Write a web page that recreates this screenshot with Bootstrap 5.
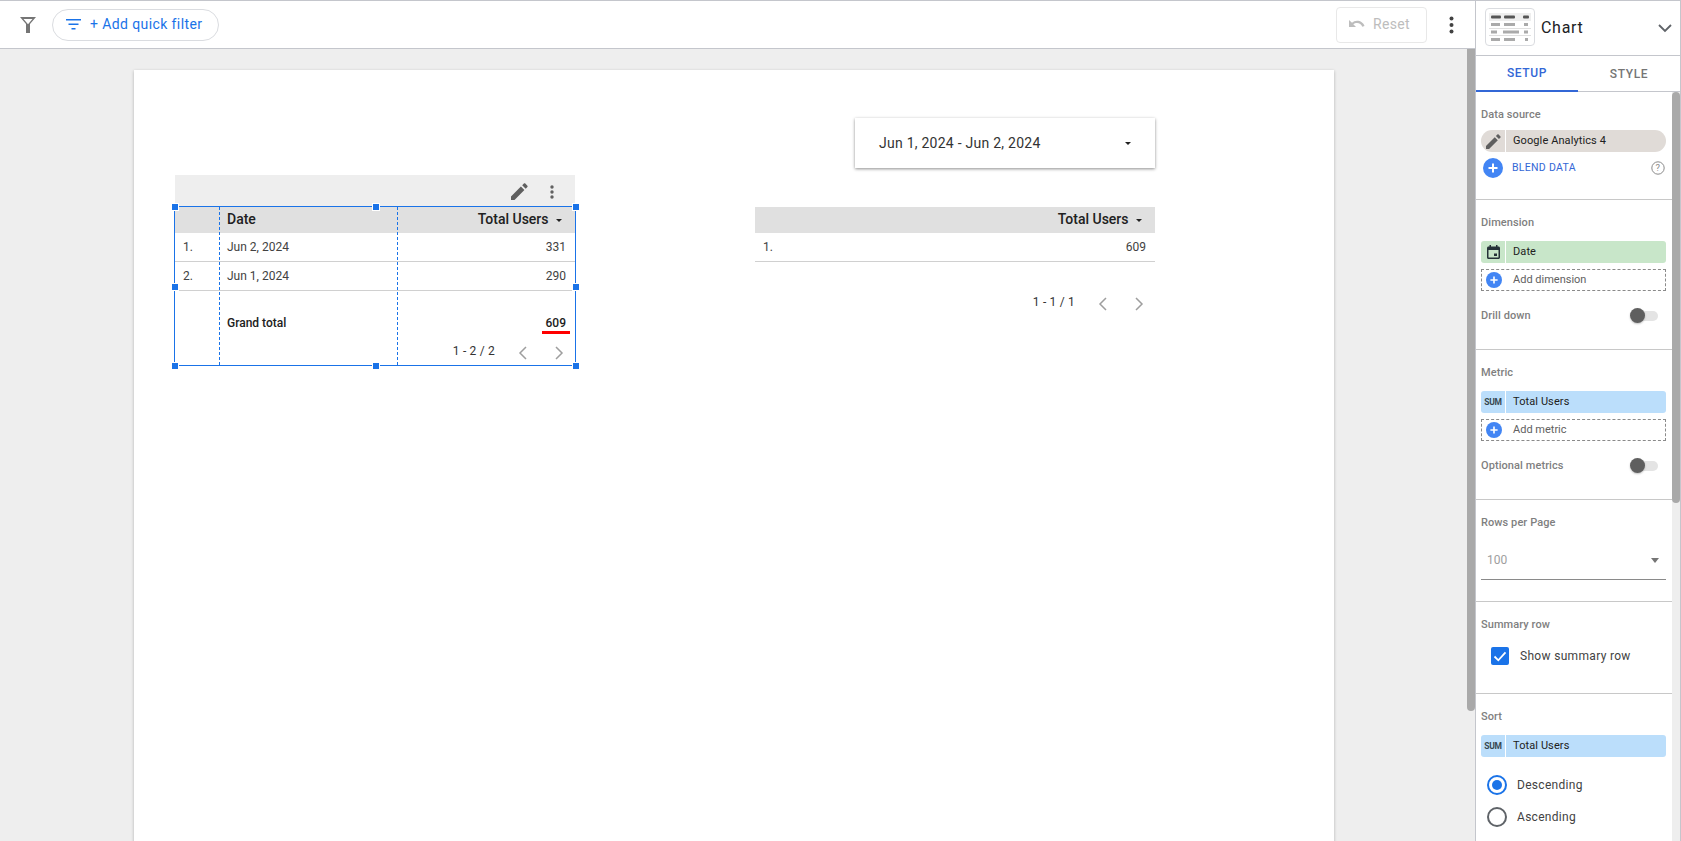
<!DOCTYPE html>
<html lang="en">
<head>
<meta charset="utf-8">
<title>Chart editor</title>
<link href="https://cdn.jsdelivr.net/npm/bootstrap@5.3.0/dist/css/bootstrap.min.css" rel="stylesheet">
<style>
html,body{height:100%;overflow:hidden}
body{font-family:Roboto,"Liberation Sans",sans-serif;font-size:12px;color:#212121;background:#fff}
.app{height:841px;width:1681px}
.leftarea{width:1476px;border-right:1px solid #c4c6cc;border-top:1px solid #c4c6cc}
.topbar{height:48px;border-bottom:1px solid #c4c6cc;padding-left:20px;padding-right:0}
.filter-pill{margin-left:16px;height:32px;width:167px;border:1px solid #dadce0;border-radius:16px;padding-left:13px;color:#1a73e8;font-size:14px;background:#fff;letter-spacing:.4px}
.filter-pill svg{margin-right:9px}
.reset-btn{height:36px;width:91px;border:1px solid #e8e8e8;border-radius:4px;color:#bdbdbd;font-size:14px;padding-left:12px;margin-right:14px;letter-spacing:.35px}
.reset-btn svg{margin-right:8px}
.kebab-box{width:21px;margin-right:13px}
.canvas-wrap{height:792px;background:#eee}
.canvas-main{padding:21px 0 0 134px;overflow:hidden}
.sheet{width:1200px;height:780px;background:#fff;box-shadow:0 1px 3px rgba(0,0,0,.25);position:relative}
.vbar{width:8px;background:#eee}
.canvas-thumb{height:662px;background:#a9a9a9;border-radius:0 0 4px 4px}
.panel-thumb{height:411px;background:#a9a9a9;border-radius:4px}
.date-ctl{position:absolute;left:721px;top:48px;width:300px;height:50px;background:#fff;box-shadow:0 1px 3px rgba(0,0,0,.45);padding:0 24px 0 24px;font-size:14px;color:#333;letter-spacing:.25px}
.caret-d{width:0;height:0;border-left:3.5px solid transparent;border-right:3.5px solid transparent;border-top:3.5px solid #212121}
.tbl-a{position:absolute;left:41px;top:137px;width:400px;height:159px}
.tbl-b{position:absolute;left:621px;top:137px;width:400px;height:120px}
.tbl-tools{position:absolute;left:41px;top:105px;width:400px;height:31px;background:#eee;padding-right:21px;padding-top:2px}
.hdr-row{height:26px;background:#e0e0e0;font-size:14px;font-weight:500;color:#212121;padding-bottom:2px}
.data-row{height:29px;border-bottom:1px solid #d0d0d0;color:#424242}
.total-row{height:46px;font-weight:500;color:#212121;padding-top:17px}
.col-idx{width:44px;padding-left:8px;flex:none}
.col-date{width:178px;padding-left:8px;flex:none}
.col-num{flex:1;text-align:right;padding-right:9px}
.col-num-b{flex:1;text-align:right;padding-right:9px}
.hdr-row .caret-d{margin-left:4px;margin-right:13px;display:inline-block;vertical-align:2px}
.hdr-row .col-num,.hdr-row .col-num-b{padding-right:0}
.num-red{position:relative;display:inline-block}
.num-red::after{content:"";position:absolute;left:-4px;right:-4px;bottom:-2px;height:3px;background:#f00}
.pager{color:#333;font-size:12px;letter-spacing:.2px}
.pager-a{height:28px;padding-right:11px}
.pager-b{position:absolute;left:621px;top:220px;width:400px;height:24px;padding-right:11px}
.pager span{margin-right:23px}
.pager svg{margin-top:4px}
.pager svg+svg{margin-left:26px}
.sel-box{position:absolute;left:40px;top:136px;width:402px;height:160px;border:1px solid #1a73e8;pointer-events:none}
.sel-line{position:absolute;top:0;bottom:0;border-left:1px dashed #1a73e8}
.sel-l1{left:44px}
.sel-l2{left:222px}
.handle{position:absolute;width:8px;height:8px;background:#1a73e8;border:1px solid #fff}
.h-tl{left:-4px;top:-4px}.h-tc{left:197px;top:-4px}.h-tr{left:397px;top:-4px}
.h-ml{left:-4px;top:76px}.h-mr{left:397px;top:76px}
.h-bl{left:-4px;top:155px}.h-bc{left:197px;top:155px}.h-br{left:397px;top:155px}
.tool-pencil{margin-right:22px}
.sidepanel{width:205px;border-right:1px solid #c4c6cc;border-top:1px solid #c4c6cc;background:#fff}
.panel-head{height:55px;border-bottom:1px solid #c4c6cc;padding:0 8px 0 9px}
.chart-thumb{width:50px;height:38px;border:1px solid #dadce0;border-radius:4px;margin-right:6px;margin-top:-2px}
.panel-title{font-size:16px;color:#202124;letter-spacing:.7px}
.tabbar{height:36px;border-bottom:1px solid #c4c6cc}
.tabx{width:102px;height:36px;font-size:12px;font-weight:500;color:#757575;letter-spacing:.6px}
.tabx.on{color:#3367d6;border-bottom:2px solid #3367d6}
.panel-body{height:749px;overflow:hidden}
.panel-content{flex:1;width:196px}
.sect{border-bottom:1px solid #c8c8c8;padding:15px 5px 0 5px;height:108px}
.sect.s-dim,.sect.s-met{height:150px}
.sect.s-rows{height:102px}
.sect.s-sum{height:92px}
.sect.s-sort{border-bottom:0;height:200px}
.sect-label{font-size:11px;font-weight:500;color:#7f7f7f;line-height:16px;margin-bottom:10px;letter-spacing:.08px}
.s-data .sect-label{margin-bottom:7px}
.chip{height:22px;width:185px;border-radius:3px;font-size:11px;color:#212121;letter-spacing:.1px}
.chip-l{width:25px;height:22px;flex:none;border-right:1px solid #fff;margin-right:1px}
.chip-t{padding-left:6px}
.chip-src{background:#e0dbd7;border-radius:11px}
.chip-dim{background:#c8e6c9}
.chip-met{background:#bbdefb}
.sum-txt{font-size:8.5px;font-weight:700;color:#37474f;letter-spacing:-.3px}
.blend{height:22px;margin-top:5px;width:185px;color:#3367d6;font-size:10.5px;padding:0 1px 0 2px;letter-spacing:.3px}
.blend-t{margin-left:9px;flex:1}
.add-row{height:22px;width:185px;margin-top:6px;border:1px dashed #8a8a8a;font-size:11px;color:#616161;padding-left:4px;letter-spacing:0}
.add-row svg{margin-right:11px}
.opt-row{height:22px;margin-top:14px;width:177px;font-size:11px;font-weight:500;color:#7f7f7f;letter-spacing:.08px}
.toggle{width:28px;height:16px;position:relative}
.toggle::before{content:"";position:absolute;left:7px;right:0;top:3px;height:10px;border-radius:5px;background:#e4e4e4}
.toggle::after{content:"";position:absolute;left:0;top:0;width:15px;height:15px;border-radius:50%;background:#5f5f5f;box-shadow:0 1px 2px rgba(0,0,0,.25)}
.sel-field{width:185px;height:39px;padding:0 7px 0 6px;border-bottom:1px solid #8a8a8a;color:#9e9e9e;font-size:12px}
.caret-g{width:0;height:0;border-left:4.5px solid transparent;border-right:4.5px solid transparent;border-top:5px solid #757575}
.chk-row{padding-left:10px;font-size:12px;color:#424242;margin-top:14px;letter-spacing:.32px}
.chk-box{width:18px;height:18px;background:#1a73e8;border-radius:2px;margin-right:11px}
.radio-row{font-size:12px;color:#424242;padding-left:6px;height:32px;letter-spacing:.3px}
.radio-first{margin-top:12px}
.radio-ring{width:20px;height:20px;border-radius:50%;border:2px solid #5f6368;margin-right:10px;flex:none}
.radio-ring.on{border-color:#1a73e8;position:relative}
.radio-ring.on::after{content:"";position:absolute;left:3px;top:3px;width:10px;height:10px;border-radius:50%;background:#1a73e8}
</style>
</head>
<body>
<div class="app d-flex">
  <div class="leftarea d-flex flex-column">
    <div class="topbar d-flex align-items-center">
      <svg width="16" height="16" viewBox="0 0 16 16" aria-hidden="true"><path d="M0 0h16l-6 7v9H6V7ZM3.500 2 8 7.300 12.500 2Z" fill="#757575" fill-rule="evenodd"/></svg>
      <div class="filter-pill d-flex align-items-center">
        <svg width="15" height="11" viewBox="0 0 15 11" aria-hidden="true"><path d="M0 0h15v1.500H0ZM2.500 4.500h10V6h-10ZM5.500 9h4v1.500h-4Z" fill="#1a73e8"/></svg>
        <span>+ Add quick filter</span>
      </div>
      <div class="ms-auto d-flex align-items-center">
        <div class="reset-btn d-flex align-items-center">
          <svg width="16" height="9" viewBox="0 0 16 9" aria-hidden="true"><path d="M0 0v7h7L4.300 4.300C5.300 3.500 6.600 3 8 3c2.400 0 4.500 1.600 5.300 3.700L15.500 6C14.500 2.800 11.500.8 8 .8 6.100.8 4.300 1.500 3 2.800Z" fill="#bdbdbd"/></svg>
          <span>Reset</span>
        </div>
        <div class="kebab-box d-flex justify-content-center">
          <svg width="5" height="18" viewBox="0 0 5 18" aria-hidden="true"><circle cx="2.500" cy="2.500" r="2" fill="#424242"/><circle cx="2.500" cy="9" r="2" fill="#424242"/><circle cx="2.500" cy="15.500" r="2" fill="#424242"/></svg>
        </div>
      </div>
    </div>
    <div class="canvas-wrap d-flex">
      <div class="canvas-main flex-grow-1">
        <div class="sheet">
          <div class="date-ctl d-flex align-items-center justify-content-between">
            <span>Jun 1, 2024 - Jun 2, 2024</span>
            <i class="caret-d"></i>
          </div>

          <div class="tbl-tools d-flex align-items-center justify-content-end">
            <svg class="tool-pencil" width="17" height="17" viewBox="0 0 17 17" aria-hidden="true"><path d="M0 13.500V17h3.500L13.400 7.100 9.900 3.600ZM16.400 4.100c.4-.4.400-1 0-1.400L14.300.6c-.4-.4-1-.4-1.400 0L11.200 2.300l3.500 3.500Z" fill="#5f5f5f"/></svg>
            <svg width="4" height="14" viewBox="0 0 4 14" aria-hidden="true"><circle cx="2" cy="2" r="1.700" fill="#616161"/><circle cx="2" cy="7" r="1.700" fill="#616161"/><circle cx="2" cy="12" r="1.700" fill="#616161"/></svg>
          </div>

          <div class="tbl-a">
            <div class="hdr-row d-flex align-items-center">
              <div class="col-idx"></div>
              <div class="col-date">Date</div>
              <div class="col-num">Total Users <i class="caret-d"></i></div>
            </div>
            <div class="data-row d-flex align-items-center">
              <div class="col-idx">1.</div><div class="col-date">Jun 2, 2024</div><div class="col-num">331</div>
            </div>
            <div class="data-row d-flex align-items-center">
              <div class="col-idx">2.</div><div class="col-date">Jun 1, 2024</div><div class="col-num">290</div>
            </div>
            <div class="total-row d-flex align-items-center">
              <div class="col-idx"></div><div class="col-date">Grand total</div><div class="col-num"><span class="num-red">609</span></div>
            </div>
            <div class="pager pager-a d-flex align-items-center justify-content-end">
              <span>1 - 2 / 2</span>
              <svg width="10" height="14" viewBox="0 0 10 14" aria-hidden="true"><path d="M8 1 2 7l6 6" fill="none" stroke="#9e9e9e" stroke-width="1.500"/></svg>
              <svg width="10" height="14" viewBox="0 0 10 14" aria-hidden="true"><path d="m2 1 6 6-6 6" fill="none" stroke="#9e9e9e" stroke-width="1.500"/></svg>
            </div>
          </div>

          <div class="sel-box">
            <div class="sel-line sel-l1"></div>
            <div class="sel-line sel-l2"></div>
            <i class="handle h-tl"></i><i class="handle h-tc"></i><i class="handle h-tr"></i>
            <i class="handle h-ml"></i><i class="handle h-mr"></i>
            <i class="handle h-bl"></i><i class="handle h-bc"></i><i class="handle h-br"></i>
          </div>

          <div class="tbl-b">
            <div class="hdr-row d-flex align-items-center">
              <div class="col-idx"></div>
              <div class="col-num-b">Total Users <i class="caret-d"></i></div>
            </div>
            <div class="data-row d-flex align-items-center">
              <div class="col-idx">1.</div><div class="col-num-b">609</div>
            </div>
          </div>
          <div class="pager pager-b d-flex align-items-center justify-content-end">
            <span>1 - 1 / 1</span>
            <svg width="10" height="14" viewBox="0 0 10 14" aria-hidden="true"><path d="M8 1 2 7l6 6" fill="none" stroke="#9e9e9e" stroke-width="1.500"/></svg>
            <svg width="10" height="14" viewBox="0 0 10 14" aria-hidden="true"><path d="m2 1 6 6-6 6" fill="none" stroke="#9e9e9e" stroke-width="1.500"/></svg>
          </div>
        </div>
      </div>
      <div class="vbar"><div class="canvas-thumb"></div></div>
    </div>
  </div>

  <div class="sidepanel d-flex flex-column">
    <div class="panel-head d-flex align-items-center">
      <div class="chart-thumb d-flex align-items-center justify-content-center">
        <svg width="42" height="30" viewBox="0 0 42 30" aria-hidden="true">
          <rect x="0" y="1" width="42" height="8" fill="#eee"/>
          <rect x="2" y="3.500" width="10" height="3" rx="1" fill="#555"/><rect x="15" y="3.500" width="11" height="3" rx="1" fill="#555"/><rect x="34" y="3.500" width="6" height="3" rx="1" fill="#555"/>
          <rect x="2" y="11" width="9" height="3" fill="#aaa"/><rect x="15" y="11" width="11" height="3" fill="#aaa"/><rect x="35" y="11" width="4" height="3" fill="#aaa"/>
          <rect x="0" y="16" width="42" height="1" fill="#e0e0e0"/>
          <rect x="2" y="18.500" width="6" height="3" fill="#aaa"/><rect x="14" y="18.500" width="16" height="3" fill="#aaa"/><rect x="35" y="18.500" width="4" height="3" fill="#aaa"/>
          <rect x="0" y="23" width="42" height="1" fill="#e0e0e0"/>
          <rect x="2" y="26" width="9" height="3" fill="#aaa"/><rect x="15" y="26" width="11" height="3" fill="#aaa"/><rect x="36" y="26" width="3" height="3" fill="#aaa"/>
        </svg>
      </div>
      <span class="panel-title">Chart</span>
      <svg class="ms-auto" width="14" height="9" viewBox="0 0 14 9" aria-hidden="true"><path d="m1 1 6 6 6-6" fill="none" stroke="#5f6368" stroke-width="1.800"/></svg>
    </div>
    <div class="tabbar d-flex">
      <div class="tabx on d-flex align-items-center justify-content-center">SETUP</div>
      <div class="tabx d-flex align-items-center justify-content-center">STYLE</div>
    </div>
    <div class="panel-body d-flex">
      <div class="panel-content">
        <section class="sect s-data">
          <div class="sect-label">Data source</div>
          <div class="chip chip-src d-flex align-items-center">
            <div class="chip-l d-flex align-items-center justify-content-center">
              <svg width="15" height="15" viewBox="0 0 17 17" aria-hidden="true"><path d="M0 13.500V17h3.500L13.400 7.100 9.900 3.600ZM16.400 4.100c.4-.4.400-1 0-1.400L14.300.6c-.4-.4-1-.4-1.400 0L11.200 2.300l3.500 3.500Z" fill="#5f5f5f"/></svg>
            </div>
            <span class="chip-t">Google Analytics 4</span>
          </div>
          <div class="blend d-flex align-items-center">
            <svg width="20" height="20" viewBox="0 0 20 20" aria-hidden="true"><circle cx="10" cy="10" r="10" fill="#4285f4"/><path d="M9 5.500h2V9h3.500v2H11v3.500H9V11H5.500V9H9Z" fill="#fff"/></svg>
            <span class="blend-t">BLEND DATA</span>
            <svg width="14" height="14" viewBox="0 0 14 14" aria-hidden="true"><circle cx="7" cy="7" r="6.200" fill="none" stroke="#8a8a8a" stroke-width="1"/><text x="7" y="10.200" text-anchor="middle" font-size="9.500" font-family="Roboto" fill="#8a8a8a">?</text></svg>
          </div>
        </section>
        <section class="sect s-dim">
          <div class="sect-label">Dimension</div>
          <div class="chip chip-dim d-flex align-items-center">
            <div class="chip-l d-flex align-items-center justify-content-center">
              <svg width="13" height="14" viewBox="0 0 13 14" aria-hidden="true"><path d="M2.500 0v1.500h-1C.7 1.500 0 2.200 0 3v9.500C0 13.300.7 14 1.500 14h10c.8 0 1.500-.7 1.500-1.500V3c0-.8-.7-1.500-1.500-1.500h-1V0H9v1.500H4V0ZM1.500 5h10v7.500h-10ZM7 8.500v2.500h3V8.500Z" fill="#263238" fill-rule="evenodd"/></svg>
            </div>
            <span class="chip-t">Date</span>
          </div>
          <div class="add-row d-flex align-items-center">
            <svg width="16" height="16" viewBox="0 0 20 20" aria-hidden="true"><circle cx="10" cy="10" r="10" fill="#4285f4"/><path d="M9 5.500h2V9h3.500v2H11v3.500H9V11H5.500V9H9Z" fill="#fff"/></svg>
            <span>Add dimension</span>
          </div>
          <div class="opt-row d-flex align-items-center justify-content-between">
            <span>Drill down</span><div class="toggle"></div>
          </div>
        </section>
        <section class="sect s-met">
          <div class="sect-label">Metric</div>
          <div class="chip chip-met d-flex align-items-center">
            <div class="chip-l d-flex align-items-center justify-content-center sum-txt">SUM</div>
            <span class="chip-t">Total Users</span>
          </div>
          <div class="add-row d-flex align-items-center">
            <svg width="16" height="16" viewBox="0 0 20 20" aria-hidden="true"><circle cx="10" cy="10" r="10" fill="#4285f4"/><path d="M9 5.500h2V9h3.500v2H11v3.500H9V11H5.500V9H9Z" fill="#fff"/></svg>
            <span>Add metric</span>
          </div>
          <div class="opt-row d-flex align-items-center justify-content-between">
            <span>Optional metrics</span><div class="toggle"></div>
          </div>
        </section>
        <section class="sect s-rows">
          <div class="sect-label">Rows per Page</div>
          <div class="sel-field d-flex align-items-center justify-content-between">
            <span>100</span><i class="caret-g"></i>
          </div>
        </section>
        <section class="sect s-sum">
          <div class="sect-label">Summary row</div>
          <div class="chk-row d-flex align-items-center">
            <div class="chk-box d-flex align-items-center justify-content-center">
              <svg width="14" height="11" viewBox="0 0 14 11" aria-hidden="true"><path d="m1.500 5.500 3.800 3.800 7.200-8" fill="none" stroke="#fff" stroke-width="1.800"/></svg>
            </div>
            <span>Show summary row</span>
          </div>
        </section>
        <section class="sect s-sort">
          <div class="sect-label">Sort</div>
          <div class="chip chip-met d-flex align-items-center">
            <div class="chip-l d-flex align-items-center justify-content-center sum-txt">SUM</div>
            <span class="chip-t">Total Users</span>
          </div>
          <div class="radio-row radio-first d-flex align-items-center"><span class="radio-ring on"></span><span>Descending</span></div>
          <div class="radio-row d-flex align-items-center"><span class="radio-ring"></span><span>Ascending</span></div>
        </section>
      </div>
      <div class="vbar"><div class="panel-thumb"></div></div>
    </div>
  </div>
</div>
<script src="https://cdn.jsdelivr.net/npm/bootstrap@5.3.0/dist/js/bootstrap.bundle.min.js"></script>
</body>
</html>
